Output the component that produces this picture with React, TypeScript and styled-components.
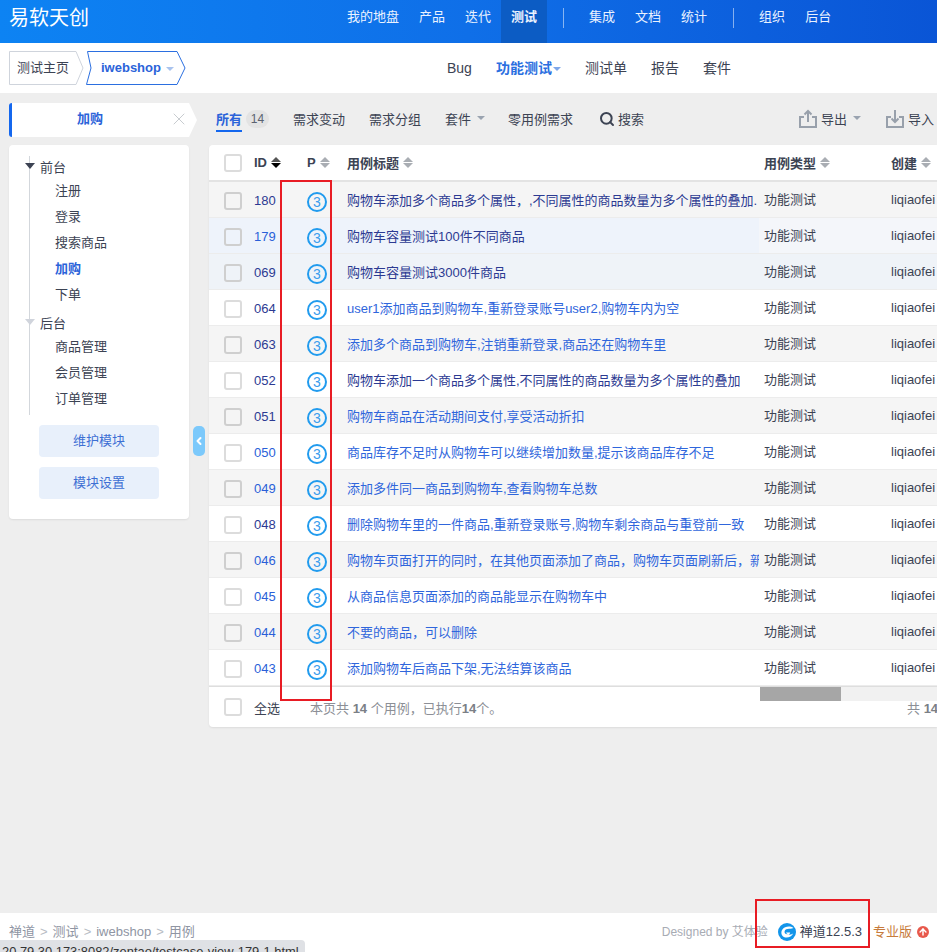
import React from 'react';
import styled, { createGlobalStyle } from 'styled-components';
import { Search, X, ChevronLeft, ArrowUp } from 'lucide-react';

const Global = createGlobalStyle`
  html, body { margin: 0; padding: 0; height: 100%; overflow: hidden; background: #eeeeee; }
  body { font-family: "Liberation Sans", "Noto Sans CJK SC", sans-serif; font-size: 13px; color: #3c4353; }
  * { box-sizing: border-box; }
`;

const Page = styled.div`
  position: relative;
  height: 952px;
  width: 937px;
  display: flex;
  flex-direction: column;
  overflow: hidden;
`;

const Header = styled.header`
  height: 43px;
  flex: none;
  display: flex;
  align-items: stretch;
  padding-left: 9px;
  background: linear-gradient(90deg, #0d83f3 0%, #0f6fe8 50%, #0a55d6 100%);
  color: #fff;
`;
const Logo = styled.div`
  width: 328px;
  font-size: 20px;
  line-height: 36px;
  color: #fff;
`;
const NavItem = styled.div<{ $active?: boolean }>`
  padding: 0 10px;
  line-height: 34px;
  height: 43px;
  color: #eaf2ff;
  font-weight: ${p => (p.$active ? 700 : 400)};
  background: ${p => (p.$active ? '#0c5cc4' : 'transparent')};
`;
const NavSep = styled.div`
  width: 1px;
  height: 20px;
  margin: 8px 15px 0 16px;
  background: rgba(255, 255, 255, 0.5);
`;

const SubNav = styled.nav`
  height: 50px;
  flex: none;
  background: #fff;
  display: flex;
  align-items: flex-start;
  padding: 8px 0 0 9px;
`;
const Crumb = styled.div<{ $w: number; $active?: boolean }>`
  position: relative;
  width: ${p => p.$w}px;
  height: 34px;
  line-height: 33px;
  flex: none;
  padding-left: ${p => (p.$active ? 15 : 8)}px;
  color: ${p => (p.$active ? '#2b63d9' : '#3c4353')};
  font-weight: ${p => (p.$active ? 700 : 400)};
  font-size: 13px;
  margin-right: ${p => (p.$active ? 0 : 2)}px;
  svg { position: absolute; left: 0; top: 0; }
`;
const Caret = styled.span<{ $color?: string; $ml?: number }>`
  display: inline-block;
  vertical-align: middle;
  width: 0;
  height: 0;
  margin-left: ${p => p.$ml ?? 5}px;
  border-left: 4px solid transparent;
  border-right: 4px solid transparent;
  border-top: 4px solid ${p => p.$color ?? '#9aa3b0'};
`;
const SubTabs = styled.div`
  display: flex;
  gap: 24px;
  margin-left: 261px;
  font-size: 14px;
  line-height: 35px;
`;
const SubTab = styled.div<{ $active?: boolean }>`
  color: ${p => (p.$active ? '#2b6fe0' : '#3c4353')};
  font-weight: ${p => (p.$active ? 700 : 400)};
  white-space: nowrap;
`;

const Main = styled.main`
  position: relative;
  flex: 1;
  display: flex;
  align-items: flex-start;
  padding: 10px 0 0 9px;
  min-height: 0;
`;
const Side = styled.aside`
  width: 188px;
  flex: none;
`;
const SideTab = styled.div`
  position: relative;
  height: 34px;
  width: 188px;
  background: #fff;
  border-left: 3px solid #1467ee;
  border-radius: 3px 0 0 3px;
  clip-path: polygon(0 0, 180px 0, 188px 50%, 180px 100%, 0 100%);
  color: #2b63d9;
  font-weight: 700;
  line-height: 32px;
  padding-left: 65px;
  svg { position: absolute; left: 157px; top: 6px; color: #c3c7cc; }
`;
const Panel = styled.div`
  width: 180px;
  height: 374px;
  margin-top: 8px;
  background: #fff;
  border-radius: 4px;
  box-shadow: 0 1px 2px rgba(0, 0, 0, 0.08);
  padding: 11px 0 0 20px;
`;
const Tree = styled.div`
  border-left: 1px solid #d3d7dc;
  height: 259px;
  margin-bottom: 10px;
  margin-top: 1px;
`;
const GroupLabel = styled.div<{ $first?: boolean }>`
  display: flex;
  align-items: center;
  height: 22px;
  padding-bottom: 2px;
  margin-top: ${p => (p.$first ? -1 : 4)}px;
  margin-left: -5px;
  gap: 5px;
`;
const TreeCaret = styled.span<{ $muted?: boolean }>`
  width: 0;
  height: 0;
  border-left: 5px solid transparent;
  border-right: 5px solid transparent;
  border-top: 6px solid ${p => (p.$muted ? '#d0d4dc' : '#3c4353')};
`;
const Leaf = styled.div<{ $active?: boolean }>`
  height: 26px;
  line-height: 26px;
  padding-left: 25px;
  color: ${p => (p.$active ? '#2b63d9' : '#3c4353')};
  font-weight: ${p => (p.$active ? 700 : 400)};
`;
const SideButton = styled.div`
  width: 120px;
  height: 32px;
  margin: 0 0 10px 10px;
  background: #e8f0fb;
  border-radius: 4px;
  color: #3d6fd4;
  text-align: center;
  line-height: 32px;
`;
const Toggle = styled.div`
  position: absolute;
  left: 193px;
  top: 333px;
  width: 12px;
  height: 30px;
  background: #7cc9fb;
  border-radius: 5px;
  display: flex;
  align-items: center;
  justify-content: center;
  color: #fff;
`;

const Content = styled.section`
  flex: 1;
  min-width: 0;
  margin-left: 12px;
`;
const Toolbar = styled.div`
  height: 34px;
  display: flex;
  align-items: center;
  padding-left: 7px;
  white-space: nowrap;
  margin-bottom: 8px;
`;
const ToolTab = styled.div<{ $active?: boolean; $ml?: number }>`
  position: relative;
  flex: none;
  margin-left: ${p => p.$ml ?? 0}px;
  color: ${p => (p.$active ? '#2b63d9' : '#3c4353')};
  font-weight: ${p => (p.$active ? 700 : 400)};
  display: flex;
  align-items: center;
  height: 34px;
  padding-bottom: 4px;
  &::after {
    content: ${p => (p.$active ? "''" : 'none')};
    position: absolute;
    left: 0;
    right: 0;
    bottom: 5px;
    height: 2px;
    background: #1467ee;
  }
`;
const Count = styled.span`
  flex: none;
  margin: 0 0 3px 4px;
  height: 18px;
  width: 23px;
  border-radius: 9px;
  background: #e3e3e3;
  color: #5a6270;
  font-size: 12px;
  line-height: 18px;
  text-align: center;
`;
const ToolIcon = styled.span<{ $ml: number }>`
  flex: none;
  display: inline-flex;
  margin-left: ${p => p.$ml}px;
  margin-right: 3px;
  margin-bottom: 3px;
  color: #3c4353;
`;

const Card = styled.div`
  position: relative;
  width: 728px;
  background: #fff;
  border-radius: 4px 0 0 4px;
  box-shadow: 0 1px 2px rgba(0, 0, 0, 0.08);
  overflow: hidden;
`;
const Grid = styled.div`
  display: grid;
  grid-template-columns: 45px 53px 40px 412px 132px 46px;
  align-items: center;
`;
const HeadRow = styled(Grid)`
  height: 37px;
  border-bottom: 2px solid #e3e3e3;
  font-weight: 700;
  color: #3c4353;
`;
const HeadCell = styled.div<{ $pl?: number }>`
  display: flex;
  align-items: center;
  gap: 4px;
  white-space: nowrap;
  padding-left: ${p => p.$pl ?? 0}px;
`;
const Sort = styled.span<{ $active?: boolean }>`
  display: inline-flex;
  flex-direction: column;
  gap: 1px;
  &::before {
    content: '';
    border-left: 5px solid transparent;
    border-right: 5px solid transparent;
    border-bottom: 5px solid ${p => (p.$active ? '#555' : '#a9adb3')};
  }
  &::after {
    content: '';
    border-left: 5px solid transparent;
    border-right: 5px solid transparent;
    border-top: 5px solid ${p => (p.$active ? '#000' : '#a9adb3')};
  }
`;
const Row = styled(Grid)<{ $bg: string }>`
  height: 36px;
  background: ${p => p.$bg};
  border-bottom: 1px solid #ececec;
`;
const CheckCell = styled.div<{ $mt?: number }>`
  padding-left: 15px;
  display: flex;
  margin-top: ${p => p.$mt ?? 0}px;
`;
const Check = styled.span<{ $dark?: boolean }>`
  width: 18px;
  height: 18px;
  background: transparent;
  border: 2px solid ${p => (p.$dark ? '#cfcfcf' : '#dcdcdc')};
  border-radius: 3px;
`;
const IdCell = styled.div<{ $visited?: boolean }>`
  padding-top: 1px;
  color: ${p => (p.$visited ? '#2c3a92' : '#2a5fd8')};
`;
const Pri = styled.span`
  display: block;
  width: 20px;
  height: 20px;
  margin-top: 4px;
  border: 2px solid #219bee;
  border-radius: 50%;
  color: #3b9ded;
  font-size: 14px;
  line-height: 16px;
  text-align: center;
`;
const TitleCell = styled.div<{ $visited?: boolean }>`
  color: ${p => (p.$visited ? '#2c3a92' : '#2f66dc')};
  white-space: nowrap;
  overflow: hidden;
`;
const TypeCell = styled.div<{ $bg?: string }>`
  align-self: stretch;
  display: flex;
  align-items: center;
  padding: 0 0 2px 5px;
  white-space: nowrap;
  background: ${p => p.$bg ?? 'transparent'};
`;
const UserCell = styled.div<{ $bg?: string }>`
  align-self: stretch;
  display: flex;
  align-items: center;
  white-space: nowrap;
  background: ${p => p.$bg ?? 'transparent'};
`;
const TableFoot = styled.div`
  position: relative;
  height: 41px;
  display: flex;
  align-items: center;
  border-top: 1px solid #dedede;
  padding-left: 15px;
  white-space: nowrap;
`;
const FootLabel = styled.span`
  margin-left: 12px;
  width: 56px;
`;
const FootInfo = styled.span`
  color: #8c8f96;
  b { color: #7b7f86; }
`;
const FootTotal = styled.span`
  position: absolute;
  left: 698px;
  top: 11px;
  color: #8c8f96;
  b { color: #7b7f86; }
`;
const ScrollTrack = styled.div`
  position: absolute;
  left: 551px;
  right: 0;
  top: 0;
  height: 14px;
  background: #f1f1f1;
`;
const ScrollThumb = styled.div`
  width: 81px;
  height: 14px;
  background: #a6a6a6;
`;

const Footer = styled.footer`
  height: 39px;
  flex: none;
  background: #fff;
  display: flex;
  align-items: flex-start;
  padding: 10px 0 0 9px;
  color: #8f95a3;
  line-height: 18px;
  white-space: nowrap;
`;
const Sep = styled.span`
  color: #b8bcc4;
  margin: 0 5px;
`;
const FooterRight = styled.div`
  margin-left: auto;
  display: flex;
  align-items: center;
  height: 18px;
  padding-right: 8px;
`;
const Designed = styled.span`
  color: #a8acb4;
  font-size: 12px;
`;
const Version = styled.span`
  display: flex;
  align-items: center;
  gap: 4px;
  margin-left: 10px;
  color: #3c4353;
  font-size: 13px;
`;
const Pro = styled.span`
  margin-left: 11px;
  color: #c77b3c;
  font-size: 13px;
`;
const ProBadge = styled.span`
  margin-left: 5px;
  width: 12px;
  height: 12px;
  border-radius: 50%;
  background: #e8594c;
  color: #fff;
  display: flex;
  align-items: center;
  justify-content: center;
`;
const StatusTip = styled.div`
  position: absolute;
  left: 0;
  bottom: 0;
  width: 305px;
  height: 12px;
  background: #dfe1e5;
  border-radius: 0 4px 0 0;
  padding-left: 2px;
  overflow: hidden;
  color: #333;
  font-size: 12.9px;
  line-height: 24px;
  white-space: nowrap;
`;
const RedBox = styled.div<{ $l: number; $t: number; $w: number; $h: number }>`
  position: absolute;
  left: ${p => p.$l}px;
  top: ${p => p.$t}px;
  width: ${p => p.$w}px;
  height: ${p => p.$h}px;
  border: 2px solid #e81c24;
  pointer-events: none;
`;

const nav1 = ['我的地盘', '产品', '迭代'];
type R = [string, boolean, string, boolean];
const rows: R[] = [
  ['180', true, '购物车添加多个商品多个属性，,不同属性的商品数量为多个属性的叠加.', true],
  ['179', false, '购物车容量测试100件不同商品', true],
  ['069', true, '购物车容量测试3000件商品', true],
  ['064', true, 'user1添加商品到购物车,重新登录账号user2,购物车内为空', false],
  ['063', true, '添加多个商品到购物车,注销重新登录,商品还在购物车里', false],
  ['052', true, '购物车添加一个商品多个属性,不同属性的商品数量为多个属性的叠加', true],
  ['051', true, '购物车商品在活动期间支付,享受活动折扣', false],
  ['050', false, '商品库存不足时从购物车可以继续增加数量,提示该商品库存不足', false],
  ['049', false, '添加多件同一商品到购物车,查看购物车总数', false],
  ['048', true, '删除购物车里的一件商品,重新登录账号,购物车剩余商品与重登前一致', false],
  ['046', false, '购物车页面打开的同时，在其他页面添加了商品，购物车页面刷新后，新增商品显示', false],
  ['045', false, '从商品信息页面添加的商品能显示在购物车中', false],
  ['044', false, '不要的商品，可以删除', false],
  ['043', false, '添加购物车后商品下架,无法结算该商品', false],
];

const rowBg = (i: number) => {
  if (i === 1) return '#eef3fb';
  if (i === 2) return '#eff3f8';
  return i % 2 === 0 ? '#f5f5f5' : '#ffffff';
};

const CrumbShape = ({ w, color, notch }: { w: number; color: string; notch?: boolean }) => (
  <svg width={w} height={34} viewBox={`0 0 ${w} 34`} fill="none">
    <path
      d={
        notch
          ? `M1.5 .5H${w - 9}L${w - 1} 17L${w - 9} 33.5H.5L5 17Z`
          : `M${w - 8} .5H.5V33.5H${w - 8}L${w - 1} 17Z`
      }
      stroke={color}
      strokeWidth="1"
    />
  </svg>
);

const ExportIcon = () => (
  <svg width="20" height="20" viewBox="0 0 20 20" fill="none" stroke="#98a0ab" strokeWidth="2">
    <path d="M6 8H2v10h16V8h-4" />
    <path d="M10 13V2M6.5 5.5L10 2l3.5 3.5" />
  </svg>
);
const ImportIcon = () => (
  <svg width="20" height="20" viewBox="0 0 20 20" fill="none" stroke="#98a0ab" strokeWidth="2">
    <path d="M6 8H2v10h16V8h-4" />
    <path d="M10 1v12M6.5 9.5L10 13l3.5-3.5" />
  </svg>
);
const ZentaoLogo = () => (
  <svg width="18" height="18" viewBox="0 0 18 18">
    <circle cx="9" cy="9" r="9" fill="#1295ea" />
    <path
      d="M15.5 5C12 2.8 7 3.2 4.4 6.4 2.4 9.2 3.4 13.6 7.2 14.4c3.2.6 6.4-.8 8-3.8-1.8 1-3.4 1.4-5 1.2 1-.4 1.8-1.2 2-2.4H8c.4 1 1.2 1.4 2 1.6-1.4.6-3 0-3.4-1.4C6.2 7.6 7.6 6.2 9.6 6c2-.2 3.8-.2 5.9-1z"
      fill="#fff"
    />
  </svg>
);

export default function App() {
  return (
    <Page>
      <Global />
      <Header>
        <Logo>易软天创</Logo>
        {nav1.map(n => (
          <NavItem key={n}>{n}</NavItem>
        ))}
        <NavItem $active>测试</NavItem>
        <NavSep />
        {['集成', '文档', '统计'].map(n => (
          <NavItem key={n}>{n}</NavItem>
        ))}
        <NavSep />
        {['组织', '后台'].map(n => (
          <NavItem key={n}>{n}</NavItem>
        ))}
      </Header>
      <SubNav>
        <Crumb $w={75}>
          <CrumbShape w={75} color="#cfd4dc" />
          测试主页
        </Crumb>
        <Crumb $w={100} $active>
          <CrumbShape w={100} color="#2b6fe0" notch />
          iwebshop
          <Caret $color="#a9c3ee" />
        </Crumb>
        <SubTabs>
          <SubTab>Bug</SubTab>
          <SubTab $active>
            功能测试
            <Caret $color="#7fa8ea" $ml={1} />
          </SubTab>
          <SubTab>测试单</SubTab>
          <SubTab>报告</SubTab>
          <SubTab>套件</SubTab>
        </SubTabs>
      </SubNav>
      <Main>
        <Side>
          <SideTab>
            加购
            <X size={20} strokeWidth={1.1} />
          </SideTab>
          <Panel>
            <Tree>
              <GroupLabel $first>
                <TreeCaret />
                前台
              </GroupLabel>
              {['注册', '登录', '搜索商品'].map(t => (
                <Leaf key={t}>{t}</Leaf>
              ))}
              <Leaf $active>加购</Leaf>
              <Leaf>下单</Leaf>
              <GroupLabel>
                <TreeCaret $muted />
                后台
              </GroupLabel>
              {['商品管理', '会员管理', '订单管理'].map(t => (
                <Leaf key={t}>{t}</Leaf>
              ))}
            </Tree>
            <SideButton>维护模块</SideButton>
            <SideButton>模块设置</SideButton>
          </Panel>
        </Side>
        <Toggle>
          <ChevronLeft size={14} strokeWidth={4} />
        </Toggle>
        <Content>
          <Toolbar>
            <ToolTab $active>所有</ToolTab>
            <Count>14</Count>
            <ToolTab $ml={24}>需求变动</ToolTab>
            <ToolTab $ml={24}>需求分组</ToolTab>
            <ToolTab $ml={24}>
              套件
              <Caret $ml={6} />
            </ToolTab>
            <ToolTab $ml={23}>零用例需求</ToolTab>
            <ToolIcon $ml={26}>
              <Search size={16} strokeWidth={3} />
            </ToolIcon>
            <ToolTab>搜索</ToolTab>
            <ToolIcon $ml={154}>
              <ExportIcon />
            </ToolIcon>
            <ToolTab>
              导出
              <Caret $ml={6} />
            </ToolTab>
            <ToolIcon $ml={24}>
              <ImportIcon />
            </ToolIcon>
            <ToolTab>
              导入
              <Caret $ml={6} />
            </ToolTab>
          </Toolbar>
          <Card>
            <HeadRow>
              <CheckCell>
                <Check />
              </CheckCell>
              <HeadCell>
                ID
                <Sort $active />
              </HeadCell>
              <HeadCell>
                P
                <Sort />
              </HeadCell>
              <HeadCell>
                用例标题
                <Sort />
              </HeadCell>
              <HeadCell $pl={5}>
                用例类型
                <Sort />
              </HeadCell>
              <HeadCell>
                创建
                <Sort />
              </HeadCell>
            </HeadRow>
            {rows.map(([id, idV, title, titleV], i) => {
              const side = i === 1 ? '#f4f6fa' : undefined;
              return (
                <Row key={id} $bg={rowBg(i)}>
                  <CheckCell $mt={2}>
                    <Check $dark={i % 2 === 0 || i === 1} />
                  </CheckCell>
                  <IdCell $visited={idV}>{id}</IdCell>
                  <div>
                    <Pri>3</Pri>
                  </div>
                  <TitleCell $visited={titleV}>{title}</TitleCell>
                  <TypeCell $bg={side}>功能测试</TypeCell>
                  <UserCell $bg={side}>liqiaofei</UserCell>
                </Row>
              );
            })}
            <TableFoot>
              <Check />
              <FootLabel>全选</FootLabel>
              <FootInfo>
                本页共 <b>14</b> 个用例，已执行<b>14</b>个。
              </FootInfo>
              <FootTotal>
                共 <b>14</b>
              </FootTotal>
              <ScrollTrack>
                <ScrollThumb />
              </ScrollTrack>
            </TableFoot>
          </Card>
        </Content>
      </Main>
      <Footer>
        <span>禅道</span>
        <Sep>&gt;</Sep>
        <span>测试</span>
        <Sep>&gt;</Sep>
        <span>iwebshop</span>
        <Sep>&gt;</Sep>
        <span>用例</span>
        <FooterRight>
          <Designed>Designed by 艾体验</Designed>
          <Version>
            <ZentaoLogo />
            禅道12.5.3
          </Version>
          <Pro>专业版</Pro>
          <ProBadge>
            <ArrowUp size={10} strokeWidth={3.5} />
          </ProBadge>
        </FooterRight>
      </Footer>
      <StatusTip>20.79.30.173:8082/zentao/testcase-view-179-1.html</StatusTip>
      <RedBox $l={280} $t={180} $w={52} $h={521} />
      <RedBox $l={755} $t={899} $w={115} $h={49} />
    </Page>
  );
}
